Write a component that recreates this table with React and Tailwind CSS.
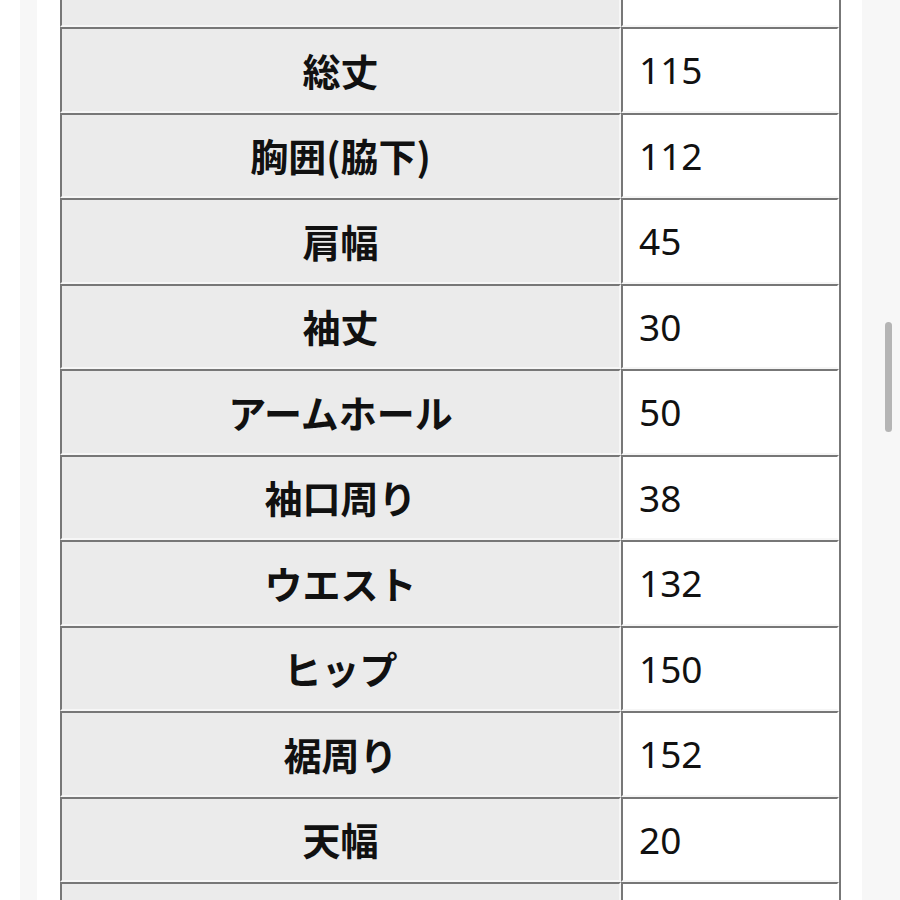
const rows = [
    { label: '', value: '' },
    { label: '総丈', value: '115' },
    { label: '胸囲(脇下)', value: '112' },
    { label: '肩幅', value: '45' },
    { label: '袖丈', value: '30' },
    { label: 'アームホール', value: '50' },
    { label: '袖口周り', value: '38' },
    { label: 'ウエスト', value: '132' },
    { label: 'ヒップ', value: '150' },
    { label: '裾周り', value: '152' },
    { label: '天幅', value: '20' },
    { label: '', value: '' },
];

export default function App() {
    return (
        <div className="relative w-[900px] h-[900px] overflow-hidden bg-white flex">
            {/* side shading */}
            <div className="w-[20px] shrink-0 bg-white" />
            <div className="w-[17px] shrink-0 bg-[#f7f7f7]" />

            {/* page column */}
            <div className="w-[825px] shrink-0 bg-white pl-[23px]">
                <div className="mt-[-58.5px] w-[781px] border-r-2 border-r-[#777]">
                    {rows.map((row, i) => (
                        <div key={i} className="grid grid-cols-[561px_218px] h-[85.5px]">
                            <div
                                className="flex items-center justify-center bg-[#ebebeb] border-t-2 border-l-2 border-t-[#777] border-l-[#777] border-b-2 border-r-2 border-b-[#f6f6f6] border-r-[#f6f6f6] text-[38px] font-bold text-[#111] leading-none"
                                style={{ fontFamily: '"Noto Sans CJK JP", "Noto Sans", sans-serif' }}
                            >
                                {row.label}
                            </div>
                            <div
                                className="flex items-center pl-[16px] bg-white border-t-2 border-l-2 border-t-[#777] border-l-[#777] border-b-2 border-r-2 border-b-[#f6f6f6] border-r-white text-[37px] text-[#111] leading-none"
                                style={{ fontFamily: '"Noto Sans", "Noto Sans CJK JP", sans-serif' }}
                            >
                                {row.value}
                            </div>
                        </div>
                    ))}
                </div>
            </div>

            <div className="flex-1 bg-[#f7f7f7]" />

            {/* scrollbar thumb */}
            <div className="absolute left-[885px] top-[322px] w-[7px] h-[110px] rounded-full bg-[#b5b5b5]" />
        </div>
    );
}
